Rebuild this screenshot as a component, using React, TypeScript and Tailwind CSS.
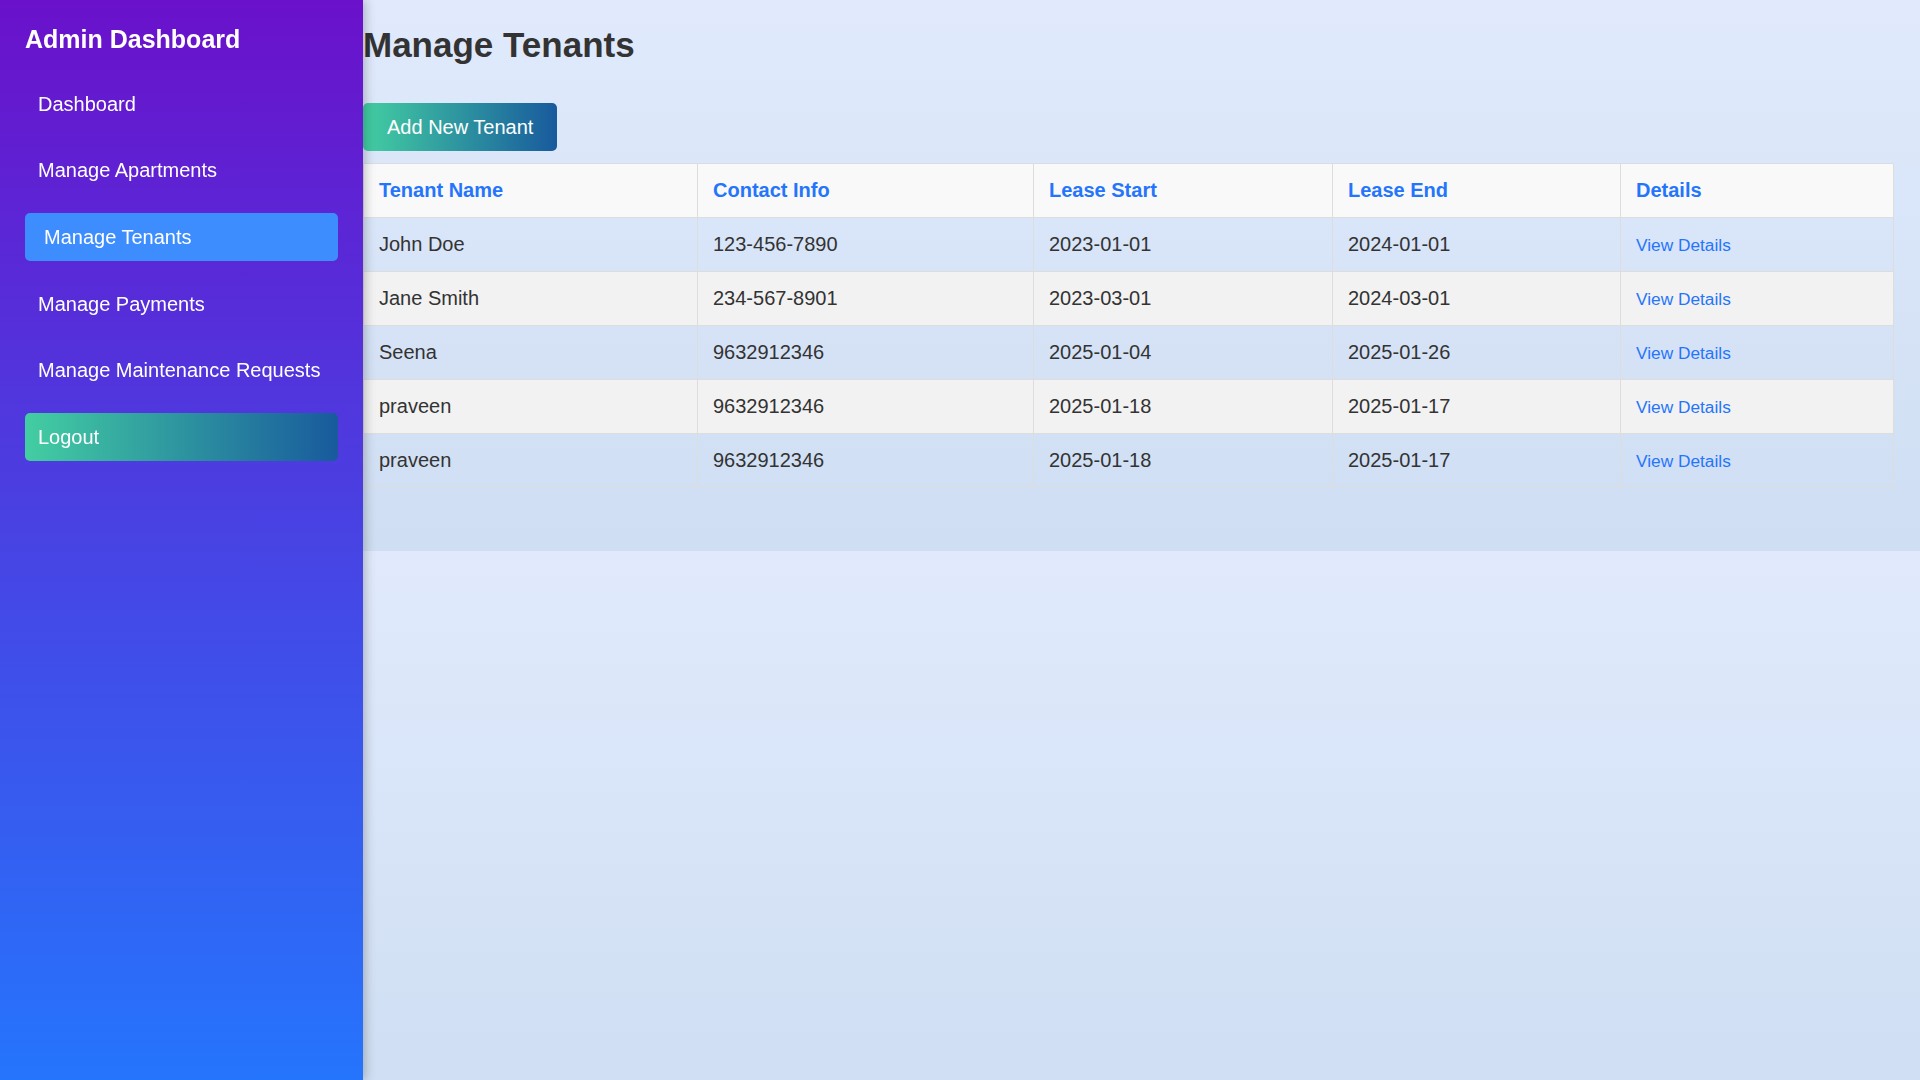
const tenants = [
  { name: "John Doe", contact: "123-456-7890", start: "2023-01-01", end: "2024-01-01" },
  { name: "Jane Smith", contact: "234-567-8901", start: "2023-03-01", end: "2024-03-01" },
  { name: "Seena", contact: "9632912346", start: "2025-01-04", end: "2025-01-26" },
  { name: "praveen", contact: "9632912346", start: "2025-01-18", end: "2025-01-17" },
  { name: "praveen", contact: "9632912346", start: "2025-01-18", end: "2025-01-17" },
];

const links = [
  { label: "Dashboard", active: false },
  { label: "Manage Apartments", active: false },
  { label: "Manage Tenants", active: true },
  { label: "Manage Payments", active: false },
  { label: "Manage Maintenance Requests", active: false },
];

const Sidebar = () => {
  return (
    <aside className="fixed left-0 top-0 h-screen w-[363px] p-[25px] bg-[linear-gradient(to_bottom,#6a11cb,#2575fc)] shadow-[2px_0_10px_rgba(0,0,0,0.25)] z-10">
      <h2 className="text-[25px] leading-[29px] font-bold text-white">Admin Dashboard</h2>
      <nav className="mt-[25.7px] flex flex-col gap-[18.67px]">
        {links.map((link) =>
          link.active ? (
            <a
              key={link.label}
              className="block h-[48px] leading-[48px] rounded-[5px] bg-[#3d8dff] pl-[19px] text-[20px] text-white"
            >
              {link.label}
            </a>
          ) : (
            <a
              key={link.label}
              className="block h-[48px] leading-[48px] rounded-[5px] pl-[13px] text-[20px] text-white"
            >
              {link.label}
            </a>
          )
        )}
        <button className="h-[48px] rounded-[5px] bg-[linear-gradient(to_right,#43cea2,#185a9d)] pl-[13px] text-left text-[20px] text-white">
          Logout
        </button>
      </nav>
    </aside>
  );
};

export default function App() {
  return (
    <div
      className="h-screen overflow-hidden bg-[linear-gradient(to_bottom,#e0eafc,#cfdef3)] bg-[length:100%_551px] bg-repeat-y"
      style={{ fontFamily: '"Liberation Sans", Arial, sans-serif' }}
    >
      <Sidebar />
      <main className="ml-[363px] h-[551px] pr-[26px] pt-[25px]">
        <h1 className="text-[35px] leading-[40px] font-bold text-[#333]">Manage Tenants</h1>

        <button className="mt-[38px] h-[48px] rounded-[5px] bg-[linear-gradient(to_right,#43cea2,#185a9d)] px-[24px] text-[20px] text-white">
          Add New Tenant
        </button>

        <table className="mt-[12px] w-full border-collapse border border-[#ddd] text-[20px] leading-[23px]">
          <thead>
            <tr className="bg-[#f9f9f9]">
              <th className="w-[334px] border border-[#ddd] px-[15px] py-[15px] text-left font-bold text-[#2575fc]">Tenant Name</th>
              <th className="w-[336px] border border-[#ddd] px-[15px] py-[15px] text-left font-bold text-[#2575fc]">Contact Info</th>
              <th className="w-[299px] border border-[#ddd] px-[15px] py-[15px] text-left font-bold text-[#2575fc]">Lease Start</th>
              <th className="w-[288px] border border-[#ddd] px-[15px] py-[15px] text-left font-bold text-[#2575fc]">Lease End</th>
              <th className="border border-[#ddd] px-[15px] py-[15px] text-left font-bold text-[#2575fc]">Details</th>
            </tr>
          </thead>
          <tbody>
            {tenants.map((t, i) => (
              <tr key={i} className={i % 2 === 1 ? "bg-[#f2f2f2]" : ""}>
                <td className="border border-[#ddd] px-[15px] py-[15px] text-[#333]">{t.name}</td>
                <td className="border border-[#ddd] px-[15px] py-[15px] text-[#333]">{t.contact}</td>
                <td className="border border-[#ddd] px-[15px] py-[15px] text-[#333]">{t.start}</td>
                <td className="border border-[#ddd] px-[15px] py-[15px] text-[#333]">{t.end}</td>
                <td className="border border-[#ddd] px-[15px] py-[15px]">
                  <a className="text-[17.3px] leading-[19px] text-[#2575fc]">View Details</a>
                </td>
              </tr>
            ))}
          </tbody>
        </table>
      </main>
    </div>
  );
}
